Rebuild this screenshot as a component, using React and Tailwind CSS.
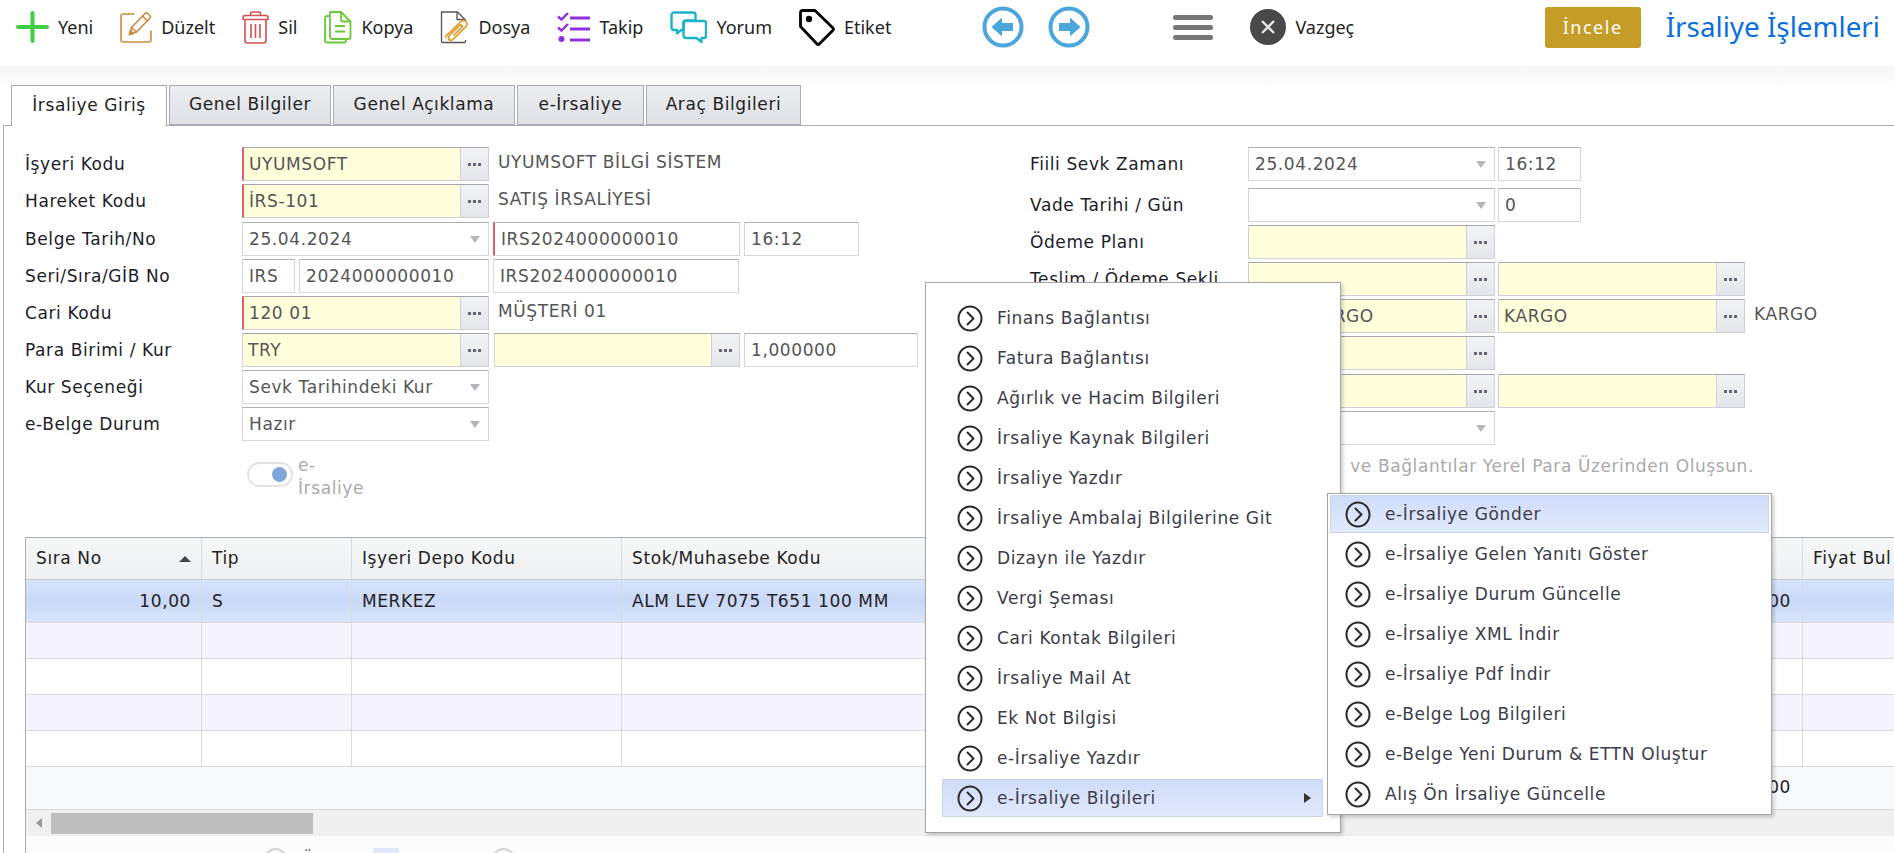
import React from "react";

const leftMenu = [
  "Finans Bağlantısı",
  "Fatura Bağlantısı",
  "Ağırlık ve Hacim Bilgileri",
  "İrsaliye Kaynak Bilgileri",
  "İrsaliye Yazdır",
  "İrsaliye Ambalaj Bilgilerine Git",
  "Dizayn ile Yazdır",
  "Vergi Şeması",
  "Cari Kontak Bilgileri",
  "İrsaliye Mail At",
  "Ek Not Bilgisi",
  "e-İrsaliye Yazdır",
];

const subMenu = [
  "e-İrsaliye Gelen Yanıtı Göster",
  "e-İrsaliye Durum Güncelle",
  "e-İrsaliye XML İndir",
  "e-İrsaliye Pdf İndir",
  "e-Belge Log Bilgileri",
  "e-Belge Yeni Durum & ETTN Oluştur",
  "Alış Ön İrsaliye Güncelle",
];

const PlusIcon = () => (
  <svg width="33" height="32" viewBox="0 0 33 32">
    <path d="M16.5 2v28M2 16h29" stroke="#3ecf45" strokeWidth="4" strokeLinecap="round" />
  </svg>
);

const EditIcon = () => (
  <svg width="32" height="32" viewBox="0 0 32 32" fill="none" stroke="#cc8a3f" strokeWidth="1.6" strokeLinejoin="round" strokeLinecap="round">
    <path d="M14 3H3a2 2 0 0 0-2 2v24a2 2 0 0 0 2 2h26a2 2 0 0 0 2-2V20" />
    <path d="M9.5 23.5l2-7L25 2.500a2 2 0 0 1 2.800 0l2 2a2 2 0 0 1 0 2.800L16.500 21z" />
    <path d="M22.500 5l5 5M11.500 16.500l5 4.500" />
    <path d="M9.500 23.500l1-4 3 3z" fill="#cc8a3f" />
  </svg>
);

const TrashIcon = () => (
  <svg width="27" height="33" viewBox="0 0 27 33" fill="none" stroke="#d2504f" strokeWidth="1.6" strokeLinejoin="round">
    <path d="M1 6.500a2 2 0 0 1 2-2h21a2 2 0 0 1 2 2v2H1z" />
    <path d="M8.500 4.500V2.500a1.500 1.500 0 0 1 1.500-1.500h7a1.500 1.500 0 0 1 1.500 1.500v2" />
    <path d="M3 8.500v21a2.500 2.500 0 0 0 2.500 2.500h16a2.500 2.500 0 0 0 2.500-2.500v-21" />
    <path d="M9 13v14M13.500 13v14M18 13v14" />
  </svg>
);

const CopyIcon = () => (
  <svg width="28" height="33" viewBox="0 0 28 33" fill="none" stroke="#6cc83c" strokeWidth="1.800" strokeLinejoin="round">
    <path d="M6 1h11l9.500 9.500V26a2 2 0 0 1-2 2H8a2 2 0 0 1-2-2z" />
    <path d="M17 1v7.500a2 2 0 0 0 2 2h7.500" />
    <path d="M6 5H3a2 2 0 0 0-2 2v22.500a2 2 0 0 0 2 2h17a2 2 0 0 0 2-2V28" />
    <path d="M11 15h10M11 20.500h10" strokeWidth="2" />
  </svg>
);

const FileClipIcon = () => (
  <svg width="29" height="33" viewBox="0 0 29 33" fill="none">
    <path d="M11 1H1.500v29.500a1 1 0 0 0 1 1h22a1 1 0 0 0 1-1V29M25.500 10.500V9l-8-8H3" stroke="#555" strokeWidth="1.300" />
    <path d="M17 1.500v7h8" stroke="#555" strokeWidth="1.300" />
    <path d="M6 25L21 10.500a3.500 3.500 0 0 1 5 5L13 28.500a2.500 2.500 0 0 1-4-3.500l11-11a1.500 1.500 0 0 1 2 2l-8 8" stroke="#e09a20" strokeWidth="1.700" strokeLinecap="round" />
    <path d="M5 27l1-1" stroke="#e09a20" strokeWidth="1.500" />
  </svg>
);

const ChecklistIcon = () => (
  <svg width="33" height="30" viewBox="0 0 33 30" fill="none" stroke="#8f2fe0">
    <path d="M1 4.500l3.500 3L11 1M1 15.500l3.500 3L11 12" strokeWidth="2.400" />
    <path d="M13 6h20M13 17h20M13 28h20" strokeWidth="3.200" />
    <circle cx="4.500" cy="27" r="3" fill="#8f2fe0" stroke="none" />
  </svg>
);

const ChatIcon = () => (
  <svg width="37" height="33" viewBox="0 0 37 33" fill="none" stroke="#1cb3cb" strokeWidth="2.400" strokeLinejoin="round">
    <path d="M4 1.500h19a2.500 2.500 0 0 1 2.500 2.500v5.500H16a2.500 2.500 0 0 0-2.500 2.500v7H11l-4 3.500v-3.500H4A2.500 2.500 0 0 1 1.500 16.500V4A2.500 2.500 0 0 1 4 1.500z" />
    <path d="M16 10h18a2 2 0 0 1 2 2v13a2 2 0 0 1-2 2h-2.500v4l-5-4H16a2.500 2.500 0 0 1-2.500-2.500V12.500A2.500 2.500 0 0 1 16 10z" />
  </svg>
);

const TagIcon = () => (
  <svg width="36" height="37" viewBox="0 0 36 37" fill="none">
    <path d="M3.500 1.500h12.500l18 17.500a1.500 1.500 0 0 1 0 2.200L20.200 35a1.500 1.500 0 0 1-2.200 0L1.500 17.500V3.500a2 2 0 0 1 2-2z" stroke="#000" strokeWidth="2.800" strokeLinejoin="round" />
    <circle cx="10" cy="10" r="3.200" fill="#000" />
  </svg>
);

const ArrowCircle = ({ dir }) => (
  <svg width="42" height="42" viewBox="0 0 42 42" fill="none">
    <circle cx="21" cy="21" r="18.500" stroke="#4ba6dc" strokeWidth="4" />
    {dir === "left" ? (
      <path d="M9.500 21L20 11.500V17h11v8H20v5.500z" fill="#4ba6dc" />
    ) : (
      <path d="M32.500 21L22 11.500V17H11v8h11v5.500z" fill="#4ba6dc" />
    )}
  </svg>
);

const ToolItem = ({ icon, label }) => (
  <div className="flex items-center gap-[9px]">
    {icon}
    <span className="text-[18px] text-[#222]">{label}</span>
  </div>
);

const Dots = () => (
  <span className="flex gap-[2px]">
    <i className="w-[3px] h-[3px] bg-[#667] block" />
    <i className="w-[3px] h-[3px] bg-[#667] block" />
    <i className="w-[3px] h-[3px] bg-[#667] block" />
  </span>
);

// sarı lookup alani ve ... butonu
const Lookup = ({ w, text, req, pl = "pl-[5px]" }) => (
  <div
    className={`flex h-[34px] border border-[#d0d1d8] border-t-[#a6a7af] bg-[#ffffdc] shrink-0 ${w} ${req ? "border-l-2 border-l-[#e0606a]" : ""}`}
  >
    <div className={`flex-1 flex items-center pt-px ${pl} text-[#555] whitespace-nowrap overflow-hidden`}>{text}</div>
    <div className="w-[28px] flex items-center justify-center border-l border-[#d0d1d8] bg-gradient-to-b from-[#f2f3f5] to-[#e5e6ea]">
      <Dots />
    </div>
  </div>
);

const Input = ({ w, text, req }) => (
  <div
    className={`flex items-center h-[34px] pt-px px-[6px] border border-[#d6d7dd] border-t-[#b0b1b8] bg-white text-[#555] whitespace-nowrap overflow-hidden shrink-0 ${w} ${req ? "border-l-2 border-l-[#e0606a]" : ""}`}
  >
    {text}
  </div>
);

const Select = ({ w, text }) => (
  <div
    className={`flex items-center justify-between h-[34px] pt-px pl-[6px] pr-[8px] border border-[#d6d7dd] border-t-[#b0b1b8] bg-white text-[#555] whitespace-nowrap shrink-0 ${w}`}
  >
    <span>{text}</span>
    <span className="w-0 h-0 border-x-[5px] border-x-transparent border-t-[7px] border-t-[#b5b6bc]" />
  </div>
);

const Row = ({ label, mt, children, lw }) => (
  <div className={`flex items-center ${mt}`}>
    <div className={`${lw} shrink-0 pt-[2px] text-[#1c1c2a] whitespace-nowrap`}>{label}</div>
    {children}
  </div>
);

const MenuIcon = () => (
  <svg width="26" height="27" viewBox="0 0 26 27" fill="none" className="shrink-0">
    <ellipse cx="13" cy="13.500" rx="11.500" ry="12" stroke="#2b2b2b" strokeWidth="2" />
    <path d="M10.500 7.500l6 6-6 6" stroke="#2b2b2b" strokeWidth="2" strokeLinecap="round" strokeLinejoin="round" />
  </svg>
);

const MenuItem = ({ text, active, arrow }) => (
  <div className="h-[40px] flex items-center">
    <div
      className={`h-[38px] w-full flex items-center relative border ${active ? "border-[#cdd6e6] bg-gradient-to-b from-[#cfdcf9] to-[#e1e9fc]" : "border-transparent"}`}
    >
      <span className="ml-[14px]">
        <MenuIcon />
      </span>
      <span className="ml-[14px] pt-px text-[#3c3c4a] whitespace-nowrap">{text}</span>
      {arrow && <span className="absolute right-[11px] w-0 h-0 border-y-[5px] border-y-transparent border-l-[7px] border-l-[#333]" />}
    </div>
  </div>
);

const gridCols = "grid grid-cols-[176px_150px_270px_1181px_1fr]";

const TableRow = ({ bg }) => (
  <div className={`${gridCols} h-[36px] border-b border-[#d9dae0] ${bg}`}>
    <div className="border-r border-[#d9dae0]" />
    <div className="border-r border-[#d9dae0]" />
    <div className="border-r border-[#d9dae0]" />
    <div className="border-r border-[#d9dae0]" />
    <div />
  </div>
);

export default function App() {
  return (
    <div className="w-[1894px] h-[853px] relative overflow-hidden bg-white text-[17px] tracking-[0.6px] font-['DejaVu_Sans',sans-serif]">
      {/* Ust arac cubugu */}
      <div className="h-[66px] flex items-center pb-[12px] pl-[16px] pr-[14px] tracking-normal font-['Noto_Sans',sans-serif]">
        <div className="flex items-center gap-[27px]">
          <ToolItem icon={<PlusIcon />} label="Yeni" />
          <ToolItem icon={<EditIcon />} label="Düzelt" />
          <ToolItem icon={<TrashIcon />} label="Sil" />
          <ToolItem icon={<CopyIcon />} label="Kopya" />
          <ToolItem icon={<FileClipIcon />} label="Dosya" />
          <ToolItem icon={<ChecklistIcon />} label="Takip" />
          <ToolItem icon={<ChatIcon />} label="Yorum" />
          <ToolItem icon={<TagIcon />} label="Etiket" />
        </div>
        <div className="ml-[91px] flex items-center gap-[24px]">
          <ArrowCircle dir="left" />
          <ArrowCircle dir="right" />
        </div>
        <div className="ml-[83px] w-[40px] flex flex-col gap-[5px]">
          <div className="h-[5px] bg-[#777] rounded-sm" />
          <div className="h-[5px] bg-[#777] rounded-sm" />
          <div className="h-[5px] bg-[#777] rounded-sm" />
        </div>
        <div className="ml-[37px] flex items-center gap-[9px]">
          <div className="w-[36px] h-[36px] rounded-full bg-[#484848] flex items-center justify-center">
            <svg width="16" height="16" viewBox="0 0 16 16">
              <path d="M2 2l12 12M14 2L2 14" stroke="#e8e8e8" strokeWidth="2.400" />
            </svg>
          </div>
          <span className="text-[18px] text-[#222]">Vazgeç</span>
        </div>
        <div className="ml-auto w-[96px] h-[41px] rounded-[3px] bg-[#c49c26] text-white text-[18px] tracking-[1.5px] flex items-center justify-center">
          İncele
        </div>
        <div className="ml-[25px] text-[27.800px] text-[#0b6fdc] whitespace-nowrap">İrsaliye İşlemleri</div>
      </div>

      {/* Sekmeler */}
      <div className="h-[59px] bg-gradient-to-b from-[#f5f5f5] to-white to-40% pl-[11px] pt-[19px] flex gap-[2px] relative z-10">
        <div className="w-[156px] h-[41px] bg-white border border-b-0 border-[#a9abb5] flex items-center justify-center text-[#222]">İrsaliye Giriş</div>
        <div className="w-[162px] h-[40px] bg-gradient-to-b from-[#ecedf0] to-[#e0e1e6] border border-[#a9abb5] flex items-center justify-center text-[#222]">Genel Bilgiler</div>
        <div className="w-[182px] h-[40px] bg-gradient-to-b from-[#ecedf0] to-[#e0e1e6] border border-[#a9abb5] flex items-center justify-center text-[#222]">Genel Açıklama</div>
        <div className="w-[127px] h-[40px] bg-gradient-to-b from-[#ecedf0] to-[#e0e1e6] border border-[#a9abb5] flex items-center justify-center text-[#222]">e-İrsaliye</div>
        <div className="w-[155px] h-[40px] bg-gradient-to-b from-[#ecedf0] to-[#e0e1e6] border border-[#a9abb5] flex items-center justify-center text-[#222]">Araç Bilgileri</div>
      </div>

      {/* Sekme icerigi */}
      <div className="ml-[3px] border-l border-t border-[#a9abb5] h-[729px]">
        <div className="h-[411px] flex pl-[21px] pt-[21px]">
          {/* Sol kolon */}
          <div className="w-[1005px] shrink-0">
            <Row label="İşyeri Kodu" lw="w-[217px]">
              <Lookup w="w-[247px]" text="UYUMSOFT" req />
              <span className="ml-[9px] -mt-[2px] text-[#555]">UYUMSOFT BİLGİ SİSTEM</span>
            </Row>
            <Row label="Hareket Kodu" lw="w-[217px]" mt="mt-[3px]">
              <Lookup w="w-[247px]" text="İRS-101" req />
              <span className="ml-[9px] -mt-[2px] text-[#555]">SATIŞ İRSALİYESİ</span>
            </Row>
            <Row label="Belge Tarih/No" lw="w-[217px]" mt="mt-[4px]">
              <Select w="w-[247px]" text="25.04.2024" />
              <div className="ml-[4px]">
                <Input w="w-[247px]" text="IRS2024000000010" req />
              </div>
              <div className="ml-[4px]">
                <Input w="w-[115px]" text="16:12" />
              </div>
            </Row>
            <Row label="Seri/Sıra/GİB No" lw="w-[217px]" mt="mt-[3px]">
              <Input w="w-[53px]" text="IRS" />
              <div className="ml-[4px]">
                <Input w="w-[190px]" text="2024000000010" />
              </div>
              <div className="ml-[4px]">
                <Input w="w-[246px]" text="IRS2024000000010" />
              </div>
            </Row>
            <Row label="Cari Kodu" lw="w-[217px]" mt="mt-[3px]">
              <Lookup w="w-[247px]" text="120 01" req />
              <span className="ml-[9px] -mt-[2px] text-[#555]">MÜŞTERİ 01</span>
            </Row>
            <Row label="Para Birimi / Kur" lw="w-[217px]" mt="mt-[3px]">
              <Lookup w="w-[247px]" text="TRY" />
              <div className="ml-[5px]">
                <Lookup w="w-[246px]" text="" />
              </div>
              <div className="ml-[4px]">
                <Input w="w-[174px]" text="1,000000" />
              </div>
            </Row>
            <Row label="Kur Seçeneği" lw="w-[217px]" mt="mt-[3px]">
              <Select w="w-[247px]" text="Sevk Tarihindeki Kur" />
            </Row>
            <Row label="e-Belge Durum" lw="w-[217px]" mt="mt-[3px]">
              <Select w="w-[247px]" text="Hazır" />
            </Row>
            <div className="flex mt-[18px] ml-[222px]">
              <div className="mt-[3px] w-[46px] h-[25px] rounded-full border-2 border-[#e3e3e3] bg-white flex items-center justify-end pr-[4px] shrink-0">
                <div className="w-[15px] h-[15px] rounded-full bg-[#7ea6d8]" />
              </div>
              <div className="ml-[5px] -mt-[5px] text-[#aaa] leading-[23px]">
                e-
                <br />
                İrsaliye
              </div>
            </div>
          </div>

          {/* Sag kolon */}
          <div className="flex-1">
            <Row label="Fiili Sevk Zamanı" lw="w-[218px]">
              <Select w="w-[247px]" text="25.04.2024" />
              <div className="ml-[3px]">
                <Input w="w-[83px]" text="16:12" />
              </div>
            </Row>
            <Row label="Vade Tarihi / Gün" lw="w-[218px]" mt="mt-[7px]">
              <Select w="w-[247px]" text="" />
              <div className="ml-[3px]">
                <Input w="w-[83px]" text="0" />
              </div>
            </Row>
            <Row label="Ödeme Planı" lw="w-[218px]" mt="mt-[3px]">
              <Lookup w="w-[247px]" text="" />
            </Row>
            <Row label="Teslim / Ödeme Şekli" lw="w-[218px]" mt="mt-[3px]">
              <Lookup w="w-[247px]" text="" />
              <div className="ml-[3px]">
                <Lookup w="w-[247px]" text="" />
              </div>
            </Row>
            <Row label="" lw="w-[218px]" mt="mt-[3px]">
              <Lookup w="w-[247px]" text="KARGO" pl="pl-[61px]" />
              <div className="ml-[3px]">
                <Lookup w="w-[247px]" text="KARGO" />
              </div>
              <span className="ml-[9px] -mt-[2px] text-[#555]">KARGO</span>
            </Row>
            <Row label="" lw="w-[218px]" mt="mt-[3px]">
              <Lookup w="w-[247px]" text="" />
            </Row>
            <Row label="" lw="w-[218px]" mt="mt-[4px]">
              <Lookup w="w-[247px]" text="" />
              <div className="ml-[3px]">
                <Lookup w="w-[247px]" text="" />
              </div>
            </Row>
            <Row label="" lw="w-[218px]" mt="mt-[3px]">
              <Select w="w-[247px]" text="" />
            </Row>
            <div className="mt-[9px] w-[724px] flex justify-end text-[#aaa] whitespace-nowrap">
              <span className="mr-[12px]">Muhasebe</span>
              <span>ve Bağlantılar Yerel Para Üzerinden Oluşsun.</span>
            </div>
          </div>
        </div>

        {/* Satir tablosu */}
        <div className="ml-[21px] border-l border-t border-[#a9abb5]">
          <div className={`${gridCols} h-[42px] bg-gradient-to-b from-[#f6f7f7] to-[#eff0f2] border-b border-[#c9cad0]`}>
            <div className="border-r border-[#d9dae0] flex items-center justify-between pt-px px-[10px] text-[#222]">
              Sıra No
              <span className="w-0 h-0 border-x-[6px] border-x-transparent border-b-[6px] border-b-[#444]" />
            </div>
            <div className="border-r border-[#d9dae0] flex items-center pt-px px-[10px] text-[#222]">Tip</div>
            <div className="border-r border-[#d9dae0] flex items-center pt-px px-[10px] text-[#222]">Işyeri Depo Kodu</div>
            <div className="border-r border-[#d9dae0] flex items-center pt-px px-[10px] text-[#222]">Stok/Muhasebe Kodu</div>
            <div className="flex items-center pt-px px-[10px] text-[#222] whitespace-nowrap overflow-hidden">Fiyat Bul</div>
          </div>
          <div className={`${gridCols} h-[43px] bg-gradient-to-b from-[#d9e4fb] via-[#c9d8f8] to-[#dae5fb] border-b border-[#d9dae0] text-[#222]`}>
            <div className="border-r border-[#d9dae0] flex items-center justify-end pt-px px-[10px]">10,00</div>
            <div className="border-r border-[#d9dae0] flex items-center pt-px px-[10px]">S</div>
            <div className="border-r border-[#d9dae0] flex items-center pt-px px-[10px]">MERKEZ</div>
            <div className="border-r border-[#d9dae0] flex items-center pt-px pl-[10px] pr-[11px]">
              <span className="flex-1">ALM LEV 7075 T651 100 MM</span>
              <span>100,00</span>
            </div>
            <div />
          </div>
          <TableRow bg="bg-[#f5f3fd]" />
          <TableRow bg="bg-white" />
          <TableRow bg="bg-[#f5f3fd]" />
          <TableRow bg="bg-white" />
          <div className="h-[43px] bg-[#f8f9fb] border-b border-[#d9dae0] flex items-center justify-end pr-[103px] text-[#222]">100,00</div>
          <div className="h-[26px] bg-[#f0f0f0] flex items-center">
            <span className="ml-[10px] w-0 h-0 border-y-[5px] border-y-transparent border-r-[6px] border-r-[#999]" />
            <div className="ml-[9px] w-[262px] h-[21px] bg-[#bebebe]" />
          </div>
          {/* Sayfalama, alt kenardan kirpiliyor */}
          <div className="h-[40px] bg-[#fcfcfd] flex items-start pt-[12px]">
            <div className="ml-[238px] w-[23px] h-[23px] rounded-full border-2 border-[#d4d4d8]" />
            <div className="ml-[14px] w-[12px] text-[#777]">Ö</div>
            <div className="ml-[60px] w-[26px] h-[23px] bg-[#dfe8fa]" />
            <div className="ml-[93px] w-[23px] h-[23px] rounded-full border-2 border-[#d4d4d8]" />
          </div>
        </div>
      </div>

      {/* Sag tik menusu */}
      <div className="absolute z-20 left-[925px] top-[282px] w-[416px] h-[551px] bg-white border border-[#a4a5ad] shadow-[2px_2px_4px_rgba(0,0,0,0.2)] pt-[15px] pl-[16px] pr-[17px]">
        {leftMenu.map((item) => (
          <MenuItem key={item} text={item} />
        ))}
        <MenuItem text="e-İrsaliye Bilgileri" active arrow />
      </div>

      {/* Alt menu */}
      <div className="absolute z-30 left-[1327px] top-[493px] w-[445px] h-[322px] bg-white border border-[#a4a5ad] shadow-[2px_2px_4px_rgba(0,0,0,0.2)] px-[2px]">
        <MenuItem text="e-İrsaliye Gönder" active />
        {subMenu.map((item) => (
          <MenuItem key={item} text={item} />
        ))}
      </div>
    </div>
  );
}
